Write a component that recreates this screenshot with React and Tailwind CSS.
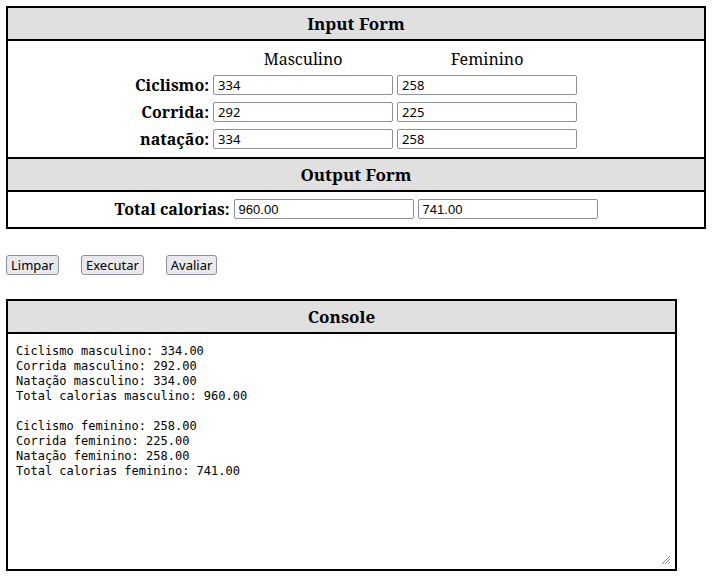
import React from "react";

const serif = "font-['Noto_Serif','DejaVu_Serif',serif]";

function Field({ value, font = "font-['Noto_Sans',sans-serif]" }) {
  return (
    <input
      readOnly
      value={value}
      className={`w-[180px] h-[20px] border border-[#8f8f9d] rounded-[2px] bg-white px-[4px] text-[13px] leading-[18px] text-black outline-none ${font}`}
    />
  );
}

function Header({ children }) {
  return (
    <div className={`h-[33px] bg-[#e0e0e0] border-b-2 border-black flex items-center justify-center text-[17px] font-bold text-black ${serif}`}>
      {children}
    </div>
  );
}

function Btn({ children }) {
  return (
    <button className="h-[20px] px-[4px] border border-[#8f8f9d] rounded-[3px] bg-[#e9e9ed] text-[13px] leading-[18px] text-black font-['Noto_Sans',sans-serif]">
      {children}
    </button>
  );
}

const lines = [
  "Ciclismo masculino: 334.00",
  "Corrida masculino: 292.00",
  "Natação masculino: 334.00",
  "Total calorias masculino: 960.00",
  "",
  "Ciclismo feminino: 258.00",
  "Corrida feminino: 225.00",
  "Natação feminino: 258.00",
  "Total calorias feminino: 741.00",
];

export default function App() {
  const rows = [
    ["Ciclismo:", "334", "258"],
    ["Corrida:", "292", "225"],
    ["natação:", "334", "258"],
  ];
  return (
    <div className="bg-white w-[712px] h-[577px] pt-[6px] px-[6px] text-black">
      <div className="w-[700px] border-2 border-black">
        <Header>Input Form</Header>
        <div className="h-[116px] flex justify-center pt-[8px]">
          <div className="grid grid-cols-[auto_180px_180px] gap-x-[4px] gap-y-[7px] content-start">
            <div />
            <div className={`text-center text-[16px] leading-[20px] h-[20px] mb-[-1px] ${serif}`}>Masculino</div>
            <div className={`text-center text-[16px] leading-[20px] h-[20px] mb-[-1px] ${serif}`}>Feminino</div>
            {rows.map(([l, m, f]) => (
              <React.Fragment key={l}>
                <div className={`text-right font-bold text-[16px] leading-[20px] ${serif}`}>{l}</div>
                <Field value={m} />
                <Field value={f} />
              </React.Fragment>
            ))}
          </div>
        </div>
        <div className="border-t-2 border-black">
          <Header>Output Form</Header>
        </div>
        <div className="h-[35px] flex justify-center items-start pt-[7px] gap-x-[4px]">
          <div className={`font-bold text-[16px] leading-[20px] ${serif}`}>Total calorias:</div>
          <Field value="960.00" font="font-['Liberation_Sans',sans-serif]" />
          <Field value="741.00" font="font-['Liberation_Sans',sans-serif]" />
        </div>
      </div>

      <div className="flex gap-x-[22px] mt-[26px]">
        <Btn>Limpar</Btn>
        <Btn>Executar</Btn>
        <Btn>Avaliar</Btn>
      </div>

      <div className="w-[671px] h-[272px] mt-[24px] border-2 border-black flex flex-col">
        <Header>Console</Header>
        <div className="relative flex-1 pt-[10px] pl-[8px] font-['DejaVu_Sans_Mono',monospace] text-[12px] leading-[15px] whitespace-pre">
          {lines.map((t, i) => (
            <div key={i} className="h-[15px]">{t}</div>
          ))}
          <svg className="absolute right-[4px] bottom-[4px]" width="10" height="10" viewBox="0 0 10 10">
            <path d="M9 1 L1 9 M9 4 L4 9 M9 7 L7 9" stroke="#888" strokeWidth="1" />
          </svg>
        </div>
      </div>
    </div>
  );
}
